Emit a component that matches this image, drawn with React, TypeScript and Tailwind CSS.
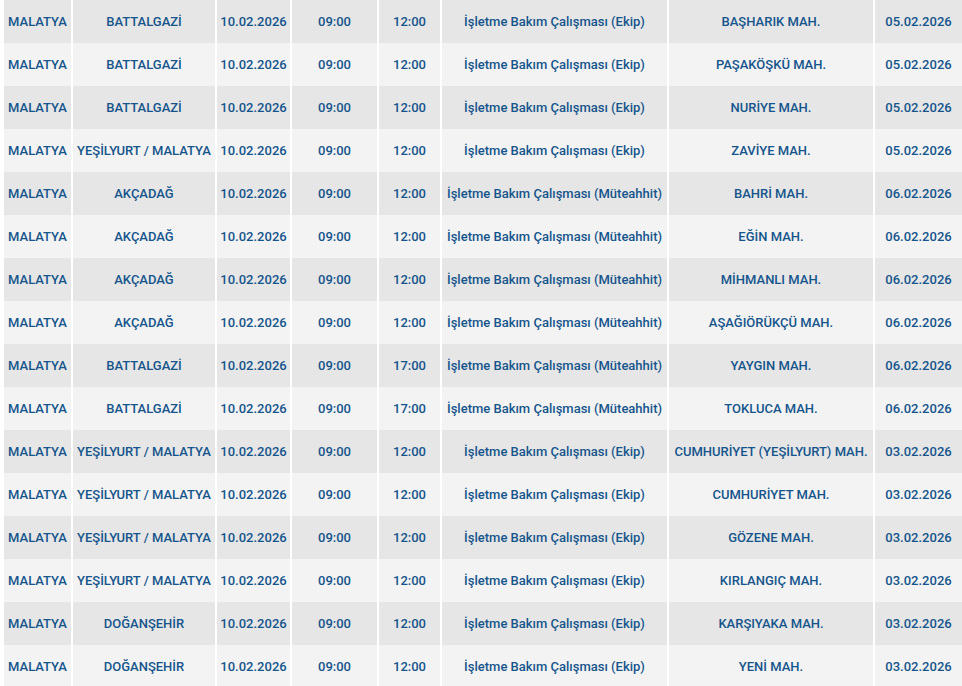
const rows: string[][] = [
  ["MALATYA", "BATTALGAZİ", "10.02.2026", "09:00", "12:00", "İşletme Bakım Çalışması (Ekip)", "BAŞHARIK MAH.", "05.02.2026"],
  ["MALATYA", "BATTALGAZİ", "10.02.2026", "09:00", "12:00", "İşletme Bakım Çalışması (Ekip)", "PAŞAKÖŞKÜ MAH.", "05.02.2026"],
  ["MALATYA", "BATTALGAZİ", "10.02.2026", "09:00", "12:00", "İşletme Bakım Çalışması (Ekip)", "NURİYE MAH.", "05.02.2026"],
  ["MALATYA", "YEŞİLYURT / MALATYA", "10.02.2026", "09:00", "12:00", "İşletme Bakım Çalışması (Ekip)", "ZAVİYE MAH.", "05.02.2026"],
  ["MALATYA", "AKÇADAĞ", "10.02.2026", "09:00", "12:00", "İşletme Bakım Çalışması (Müteahhit)", "BAHRİ MAH.", "06.02.2026"],
  ["MALATYA", "AKÇADAĞ", "10.02.2026", "09:00", "12:00", "İşletme Bakım Çalışması (Müteahhit)", "EĞİN MAH.", "06.02.2026"],
  ["MALATYA", "AKÇADAĞ", "10.02.2026", "09:00", "12:00", "İşletme Bakım Çalışması (Müteahhit)", "MİHMANLI MAH.", "06.02.2026"],
  ["MALATYA", "AKÇADAĞ", "10.02.2026", "09:00", "12:00", "İşletme Bakım Çalışması (Müteahhit)", "AŞAĞIÖRÜKÇÜ MAH.", "06.02.2026"],
  ["MALATYA", "BATTALGAZİ", "10.02.2026", "09:00", "17:00", "İşletme Bakım Çalışması (Müteahhit)", "YAYGIN MAH.", "06.02.2026"],
  ["MALATYA", "BATTALGAZİ", "10.02.2026", "09:00", "17:00", "İşletme Bakım Çalışması (Müteahhit)", "TOKLUCA MAH.", "06.02.2026"],
  ["MALATYA", "YEŞİLYURT / MALATYA", "10.02.2026", "09:00", "12:00", "İşletme Bakım Çalışması (Ekip)", "CUMHURİYET (YEŞİLYURT) MAH.", "03.02.2026"],
  ["MALATYA", "YEŞİLYURT / MALATYA", "10.02.2026", "09:00", "12:00", "İşletme Bakım Çalışması (Ekip)", "CUMHURİYET MAH.", "03.02.2026"],
  ["MALATYA", "YEŞİLYURT / MALATYA", "10.02.2026", "09:00", "12:00", "İşletme Bakım Çalışması (Ekip)", "GÖZENE MAH.", "03.02.2026"],
  ["MALATYA", "YEŞİLYURT / MALATYA", "10.02.2026", "09:00", "12:00", "İşletme Bakım Çalışması (Ekip)", "KIRLANGIÇ MAH.", "03.02.2026"],
  ["MALATYA", "DOĞANŞEHİR", "10.02.2026", "09:00", "12:00", "İşletme Bakım Çalışması (Ekip)", "KARŞIYAKA MAH.", "03.02.2026"],
  ["MALATYA", "DOĞANŞEHİR", "10.02.2026", "09:00", "12:00", "İşletme Bakım Çalışması (Ekip)", "YENİ MAH.", "03.02.2026"],
];

export default function App() {
  return (
    <div className="w-[962px] h-[686px] overflow-hidden bg-white pl-[4px] font-['Roboto',sans-serif] text-[13px] font-medium text-[#15558c]">
      {rows.map((row, i) => (
        <div
          key={i}
          className="grid h-[43px] grid-cols-[67px_142px_73px_85px_61px_225px_204px_87px] gap-x-[2px]"
        >
          {row.map((cell, j) => (
            <div
              key={j}
              className={`flex items-center justify-center whitespace-nowrap ${
                i % 2 === 0 ? "bg-[#e6e6e6]" : "bg-[#f3f3f3]"
              }`}
            >
              {cell}
            </div>
          ))}
        </div>
      ))}
    </div>
  );
}
